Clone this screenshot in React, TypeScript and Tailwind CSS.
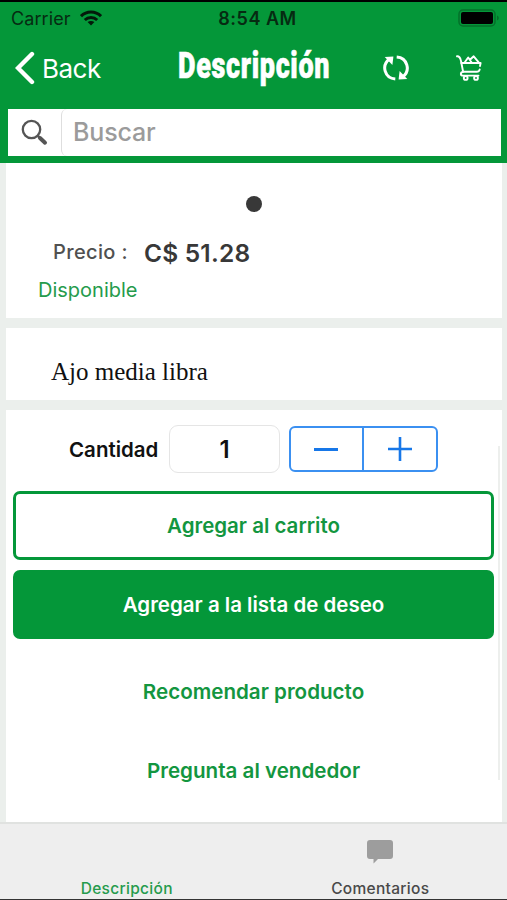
import type { ReactNode } from 'react';

function StatusBar() {
  return (
    <div className="grid h-8 grid-cols-3 items-center pl-[11px] pr-[7px] text-[18px] text-[#062b12]">
      <div className="flex items-center gap-[9px]">
        <span className="tracking-[0.1px]">Carrier</span>
        <svg width="22" height="16" viewBox="0 0 22 16" fill="none" stroke="#031a0a" strokeWidth="3">
          <path d="M1 6.2C6.5 .6 15.5 .6 21 6.2" />
          <path d="M4.8 10C8.3 6.6 13.7 6.6 17.2 10" />
          <path d="M11 15.5L7.6 12.1C9.4 10.5 12.6 10.5 14.4 12.1Z" fill="#031a0a" stroke="none" />
        </svg>
      </div>
      <span className="whitespace-nowrap pl-1 text-center font-semibold tracking-[0.5px]">8:54 AM</span>
      <svg className="justify-self-end" width="42" height="18" viewBox="0 0 42 18">
        <rect x="1" y="1" width="36" height="16" rx="4" fill="none" stroke="#04702a" strokeWidth="1.5" />
        <rect x="3" y="3" width="32" height="12" rx="2" fill="#000" />
        <path d="M39 6.5C41.4 7.4 41.4 10.6 39 11.5Z" fill="#04702a" />
      </svg>
    </div>
  );
}

function RefreshIcon() {
  return (
    <svg width="28" height="28" viewBox="0 0 28 28" fill="none" stroke="#fff" strokeWidth="3">
      <path d="M13.3 25C2.5 24.2-.8 11.5 7.2 5.2" />
      <path d="M14.7 3C25.5 3.8 28.8 16.5 20.8 22.8" />
      <path d="M2.7 3L11.4 2.4L10.4 11Z" fill="#fff" stroke="none" />
      <path d="M25.3 25L16.6 25.6L17.6 17Z" fill="#fff" stroke="none" />
    </svg>
  );
}

function CartIcon() {
  return (
    <svg width="26" height="26" viewBox="0 0 26 26" fill="none" stroke="#fff" strokeWidth="1.9" strokeLinecap="round" strokeLinejoin="round">
      <path d="M1 1.3C4.2 1 4.4 3.6 5.1 6.5L7.1 16.8C4.1 17.3 4.2 20.6 7 20.6H22.5" />
      <path d="M5.3 8H24.6L24 11" />
      <path d="M23.7 14.5C23.2 16.3 22.5 16.8 20.8 16.8H7.1" />
      <path d="M8.8 7.2L12.2 2.5L15.5 7.2M14 4.8L17.7 1.3L22.5 7.2" />
      <circle cx="9.7" cy="23" r="1.9" />
      <circle cx="20" cy="23" r="1.9" />
    </svg>
  );
}

function NavBar() {
  return (
    <div className="flex h-[75px] items-center pb-[7px] pl-[15px] text-white">
      <svg width="20" height="34" viewBox="0 0 20 34" fill="none" stroke="#fff" strokeWidth="4.4" strokeLinecap="round">
        <path d="M17 3L3 17L17 31" />
      </svg>
      <span className="ml-[7px] w-[136px] text-[26px] tracking-[-0.5px]">Back</span>
      <h1 className="w-[151px] origin-left scale-x-[0.75] whitespace-nowrap font-['Roboto',sans-serif] text-[36px] font-black tracking-[0.9px] -translate-y-[2px] [-webkit-text-stroke:0.6px_#fff]">
        Descripción
      </h1>
      <div className="ml-[53px] flex items-center gap-[46px]">
        <RefreshIcon />
        <CartIcon />
      </div>
    </div>
  );
}

function SearchBar() {
  return (
    <div className="ml-2 mr-[6px] flex h-[47px] bg-white">
      <div className="flex w-[53px] items-center pl-[13px]">
        <svg width="28" height="28" viewBox="0 0 28 28" fill="none" stroke="#555">
          <circle cx="10.5" cy="10.5" r="8.7" strokeWidth="2.3" />
          <path d="M17 17L19.5 19.3" strokeWidth="2.5" />
          <path d="M19 19L24 23.7" strokeWidth="4" strokeLinecap="round" />
        </svg>
      </div>
      <div className="flex flex-1 items-center rounded-l-md border-l border-[#dedede] pl-[11px] text-[25px] font-medium tracking-[-0.15px] text-[#9b9b9b]">
        Buscar
      </div>
    </div>
  );
}

function ActionButton({ children, filled }: { children: ReactNode; filled?: boolean }) {
  return (
    <button
      className={`block h-[69px] w-[481px] rounded-[7px] border-[3px] border-[#049739] pt-px text-[20.5px] font-semibold ${
        filled ? 'bg-[#049739] text-white' : 'bg-white text-[#13963f]'
      }`}
    >
      {children}
    </button>
  );
}

function Stepper() {
  return (
    <div className="ml-[9px] grid h-[46px] w-[149px] grid-cols-2 overflow-hidden rounded-md border-2 border-[#3b90f1]">
      <button className="flex items-center justify-center border-r-2 border-[#3b90f1]">
        <span className="h-[3px] w-6 bg-[#1777e8]" />
      </button>
      <button className="flex items-center justify-center">
        <svg width="24" height="24" viewBox="0 0 24 24" stroke="#1777e8" strokeWidth="2.6">
          <path d="M0 12H24M12 0V24" />
        </svg>
      </button>
    </div>
  );
}

function TabBar() {
  return (
    <div className="grid h-[78px] grid-cols-2 border-t-2 border-b border-t-[#e0e2e0] border-b-[#333] bg-[#eee] text-[15.5px] font-medium tracking-[0.3px]">
      <div className="flex items-end justify-center leading-[21px] text-[#259b4c]">Descripción</div>
      <div className="flex flex-col items-center justify-end text-[#494949]">
        <svg className="mb-[14px]" width="26" height="24" viewBox="0 0 26 24" fill="#9d9d9d">
          <path d="M3 0H23Q26 0 26 3V16Q26 19 23 19H11L6.5 23.5V19H3Q0 19 0 16V3Q0 0 3 0Z" />
        </svg>
        <span className="leading-[21px]">Comentarios</span>
      </div>
    </div>
  );
}

export default function App() {
  return (
    <div className="flex h-[900px] w-[507px] flex-col overflow-hidden bg-[#ebefec] font-['Inter',sans-serif]">
      <header className="h-[163px] border-t-2 border-black bg-[#049739]">
        <StatusBar />
        <NavBar />
        <SearchBar />
      </header>

      <main className="flex h-[659px] flex-col gap-[10px] pl-[6px] pr-[5px]">
        <section className="h-[155px] bg-white">
          <div className="flex h-[75px] items-end justify-center">
            <span className="mb-[26px] h-4 w-4 rounded-full bg-[#383838]" />
          </div>
          <div className="flex h-[30px] items-center pl-[47px]">
            <span className="w-[91px] pb-[2px] text-[20px] font-medium tracking-[0.35px] text-[#505050]">Precio :</span>
            <span className="pt-px text-[24.5px] font-semibold tracking-[0.2px] text-[#383838]">C$ 51.28</span>
          </div>
          <p className="pl-[32px] pt-[7px] text-[20px] leading-[30px] text-[#259b4c]">Disponible</p>
        </section>

        <section className="h-[72px] bg-white pl-[45px] pt-[29px] font-['Liberation_Serif',serif] text-[25px] leading-[30px] text-[#111]">
          Ajo media libra
        </section>

        <section className="flex min-h-0 flex-1 bg-white">
          <div className="ml-[7px] w-[481px]">
            <div className="flex h-[81px] items-center pb-[3px] pl-[56px] text-[#111]">
              <span className="w-[100px] pt-[2px] text-[20.5px] font-semibold">Cantidad</span>
              <span className="flex h-12 w-[111px] items-center justify-center rounded-[9px] border border-[#e5e5e5] pt-px text-[24px] font-semibold">
                1
              </span>
              <Stepper />
            </div>
            <ActionButton>Agregar al carrito</ActionButton>
            <div className="h-[10px]" />
            <ActionButton filled>Agregar a la lista de deseo</ActionButton>
            <div className="pt-[13px] text-center text-[20.6px] font-semibold leading-[79px] text-[#13963f]">
              <p>Recomendar producto</p>
              <p>Pregunta al vendedor</p>
            </div>
          </div>
          <div className="ml-[4px] mt-9 h-[334px] w-[2px] bg-[#edefed]" />
        </section>
      </main>

      <TabBar />
    </div>
  );
}
